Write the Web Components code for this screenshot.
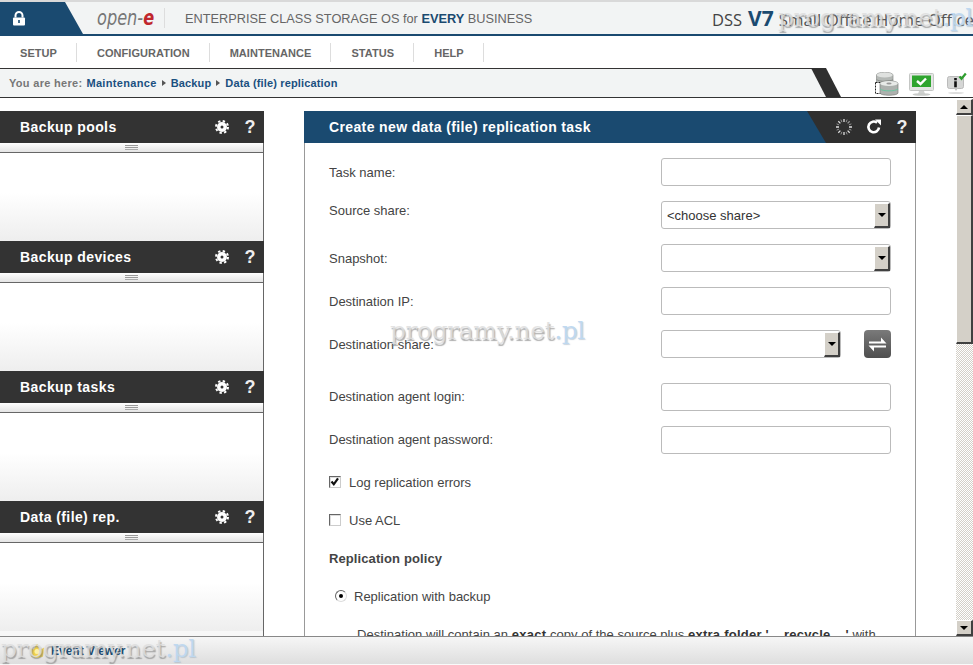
<!DOCTYPE html>
<html>
<head>
<meta charset="utf-8">
<title>open-e DSS V7</title>
<style>
  html, body { margin: 0; height: 100%; overflow: hidden; background: #fff; }
  body { display: flex; flex-direction: column; height: 665px; position: relative; font-family: "Liberation Sans", Arial, sans-serif; color: #444; }
  water-mark.top { left: 778px; top: 3px; }
  water-mark.mid { left: 390px; top: 316px; }
  water-mark.low { left: 1px; top: 634px; }
</style>
</head>
<body>
<app-header></app-header>
<nav-bar></nav-bar>
<bread-crumb></bread-crumb>
<main-area>
  <side-panel slot="side" title="Backup pools"></side-panel>
  <side-panel slot="side" title="Backup devices"></side-panel>
  <side-panel slot="side" title="Backup tasks"></side-panel>
  <side-panel slot="side" title="Data (file) rep."></side-panel>
  <task-panel slot="content" title="Create new data (file) replication task">
    <form-row label="Task name:"><text-box></text-box></form-row>
    <form-row label="Source share:" top><select-box value="&lt;choose share&gt;"></select-box></form-row>
    <form-row label="Snapshot:"><select-box></select-box></form-row>
    <form-row label="Destination IP:"><text-box></text-box></form-row>
    <form-row label="Destination share:" wide><select-box short></select-box><swap-button></swap-button></form-row>
    <form-row label="Destination agent login:" raise><text-box></text-box></form-row>
    <form-row label="Destination agent password:" raise><text-box></text-box></form-row>
    <check-line checked>Log replication errors</check-line>
    <check-line>Use ACL</check-line>
    <policy-block></policy-block>
  </task-panel>
</main-area>
<status-bar></status-bar>
<water-mark class="top"></water-mark>
<water-mark class="mid"></water-mark>
<water-mark class="low"></water-mark>

<script>
class AppHeader extends HTMLElement {
  constructor() {
    super();
    this.attachShadow({ mode: 'open' });
    this.shadowRoot.innerHTML = `
      <style>
        :host { display: flex; align-items: center; height: 32px; flex: none; background: #f2f4f4; border-top: 2px solid #d9d9d9; border-bottom: 2px solid #1a4a70; }
        .lock { width: 83px; height: 32px; flex: none; background: #1a4a70; clip-path: polygon(0 0, 65px 0, 83px 100%, 0 100%); display: flex; padding: 9px 0 0 12px; box-sizing: border-box; }
        .logo { margin-left: 14px; width: 67px; font: italic 21px/30px "DejaVu Sans", sans-serif; color: #777; transform: scaleX(.77); transform-origin: left center; white-space: nowrap; }
        .logo b { color: #c0272d; }
        .sep { width: 1px; height: 20px; background: #ddd; margin-right: 20px; }
        .slogan { font-size: 12.75px; color: #666; white-space: nowrap; }
        .slogan b { color: #1a4a70; }
        .edition { margin-left: auto; display: flex; align-items: baseline; font: 16.8px "Open Sans", sans-serif; color: #444; white-space: nowrap; width: 261px; }
        .edition b { font: bold 21px "Open Sans", sans-serif; color: #1a4a70; margin: 0 5px 0 6px; }
        .edition .d { font-size: 16.5px; }
        .edition .s { color: #555; }
      </style>
      <div class="lock">
        <svg width="14" height="15" viewBox="0 0 14 15"><path d="M3.5 6.5V4.5a3.5 3.5 0 0 1 7 0v2" fill="none" stroke="#fff" stroke-width="2"/><rect x="1" y="6.5" width="12" height="8" rx="1" fill="#fff"/><rect x="6.2" y="9" width="1.6" height="3" fill="#1a4a70"/></svg>
      </div>
      <div class="logo">open-<b>e</b></div>
      <div class="sep"></div>
      <div class="slogan">ENTERPRISE CLASS STORAGE OS for <b>EVERY</b> BUSINESS</div>
      <div class="edition"><span class="d">DSS</span><b>V7</b><span class="s">Small Office Home Office</span></div>
    `;
  }
}

class NavBar extends HTMLElement {
  constructor() {
    super();
    this.attachShadow({ mode: 'open' });
    const items = ['SETUP', 'CONFIGURATION', 'MAINTENANCE', 'STATUS', 'HELP'];
    this.shadowRoot.innerHTML = `
      <style>
        :host { display: flex; height: 32px; flex: none; align-items: center; background: #fff; }
        a { font-weight: bold; font-size: 11px; letter-spacing: .05px; color: #666; padding: 0 19px 0 20px; height: 19px; line-height: 20px; border-right: 1px solid #ddd; white-space: nowrap; }
      </style>
      ${items.map((i) => `<a>${i}</a>`).join('')}
    `;
  }
}

class BreadCrumb extends HTMLElement {
  constructor() {
    super();
    this.attachShadow({ mode: 'open' });
    this.shadowRoot.innerHTML = `
      <style>
        :host { display: flex; height: 30px; flex: none; box-sizing: border-box; border-bottom: 1px solid #333; }
        .bar { width: 826px; flex: none; box-sizing: border-box; border-top: 1px solid #333; background: #f2f4f4; display: flex; align-items: center; padding: 0 0 1px 9px; font-size: 11px; font-weight: bold; letter-spacing: .15px; white-space: nowrap; position: relative; }
        .here { color: #777; margin-right: 4px; letter-spacing: .3px; }
        a { color: #1a5080; }
        .first { letter-spacing: .33px; }
        i { width: 0; height: 0; border-left: 4px solid #555; border-top: 3.5px solid transparent; border-bottom: 3.5px solid transparent; margin: 0 5px; }
        .band { position: absolute; left: 802px; top: -1px; }
        .icons { display: flex; margin-left: 49px; padding-top: 4px; }
        .icons svg { display: block; flex: none; }
      </style>
      <div class="bar">
        <span class="here">You are here:</span><a class="first">Maintenance</a><i></i><a>Backup</a><i></i><a>Data (file) replication</a>
        <svg class="band" width="40" height="29"><polygon points="9,0 24,0 39,29 24,29" fill="#2f2f2f"/></svg>
      </div>
      <div class="icons">
        <svg width="25" height="25" viewBox="0 0 25 25">
          <path d="M1.500 3c0-3.500 16.500-3.500 16.500 0v10c0 3-16.500 3-16.500 0z" fill="#b4b8b5" stroke="#8a8d8a" stroke-width=".7"/>
          <ellipse cx="9.700" cy="3" rx="8" ry="2.400" fill="#dfe1df"/>
          <path d="M1.500 7.500c3 2.500 13.500 2.500 16.500 0" fill="none" stroke="#8f928f"/>
          <rect x=".5" y="10.500" width="8" height="11" fill="#fff" stroke="#222" stroke-dasharray="2 1"/>
          <path d="M5 11.500c0-3.500 18-3.500 18 0v9.500c0 3-18 3-18 0z" fill="#adb1ae" stroke="#7d807d" stroke-width=".7"/>
          <ellipse cx="14" cy="11.500" rx="8.800" ry="2.500" fill="#e8eae8"/>
          <ellipse cx="14" cy="11.500" rx="2.600" ry=".9" fill="#999"/>
          <path d="M5 17c3 2.500 15 2.500 18 0" fill="none" stroke="#6cc5a0"/>
        </svg>
        <svg width="26" height="23" viewBox="0 0 26 23" style="margin:1px 0 0 9px">
          <rect x=".5" y=".5" width="24" height="17" rx="1" fill="#e4e6e4" stroke="#c4c6c4"/>
          <rect x="3" y="2.500" width="19" height="11.500" fill="#2fa52f"/>
          <path d="M8 8l3.500 3L17 5.500" fill="none" stroke="#fff" stroke-width="2.400"/>
          <path d="M10 18h5l1 3H9z" fill="#d0d2d0"/><ellipse cx="12.500" cy="21.500" rx="9" ry="1.300" fill="#c9cbc9"/>
        </svg>
        <svg width="24" height="22" viewBox="0 0 24 22" style="margin:0 0 0 12px">
          <rect x=".5" y="4.500" width="16" height="12" rx="2" fill="#d5d6d5" stroke="#bbb"/>
          <path d="M7 16h4l-2 3z" fill="#c4c5c4"/>
          <rect x="7.200" y="6" width="2.600" height="2.300" fill="#111"/><rect x="7.200" y="9.300" width="2.600" height="6" fill="#111"/>
          <path d="M12.500 4.500l2 2.300 4.300-5.300" fill="none" stroke="#2e9e2e" stroke-width="2.200"/>
          <ellipse cx="9" cy="21" rx="8" ry=".9" fill="#ddd"/>
        </svg>
      </div>
    `;
  }
}

class MainArea extends HTMLElement {
  constructor() {
    super();
    this.attachShadow({ mode: 'open' });
    this.shadowRoot.innerHTML = `
      <style>
        :host { display: flex; flex: 1; min-height: 0; overflow: hidden; background: #fff; }
        .left { width: 264px; flex: none; box-sizing: border-box; padding-top: 13px; display: flex; flex-direction: column; }
        .fill { flex: 1; background: #f7f7f7; border-right: 1px solid #666; }
        .content { width: 612px; flex: none; margin: 13px 0 0 40px; }
      </style>
      <div class="left"><slot name="side"></slot><div class="fill"></div></div>
      <div class="content"><slot name="content"></slot></div>
      <scroll-bar></scroll-bar>
    `;
  }
}

class SidePanel extends HTMLElement {
  constructor() {
    super();
    this.attachShadow({ mode: 'open' });
    this.shadowRoot.innerHTML = `
      <style>
        :host { display: block; flex: none; height: 130px; }
        .head { height: 32px; background: #333; color: #fff; display: flex; align-items: center; padding: 0 6px 0 20px; }
        .name { flex: 1; font-weight: bold; font-size: 14px; letter-spacing: .4px; white-space: nowrap; }
        .head svg { overflow: visible; }
        .q { width: 16px; margin-left: 13px; text-align: center; color: #eee; font: bold 18px "Liberation Sans", sans-serif; }
        .grip { height: 9px; background: linear-gradient(#fff, #e4e4e4); border-bottom: 1px solid #666; border-right: 1px solid #666; display: flex; justify-content: center; align-items: center; }
        .grip span { width: 13px; height: 5px; background: linear-gradient(#999 1px, transparent 1px, transparent 2px, #999 2px, #999 3px, transparent 3px, transparent 4px, #aaa 4px); }
        .body { height: 88px; background: linear-gradient(#fff 45%, #eee); border-right: 1px solid #666; }
      </style>
      <div class="head">
        <div class="name">${this.getAttribute('title')}</div>
        <svg width="14" height="14" viewBox="0 0 14 14"><circle cx="7" cy="7" r="5" fill="#fff"/><circle cx="7" cy="7" r="6" fill="none" stroke="#fff" stroke-width="2" stroke-dasharray="2.350 2.360"/><circle cx="7" cy="7" r="1.500" fill="#333"/></svg>
        <div class="q">?</div>
      </div>
      <div class="grip"><span></span></div>
      <div class="body"></div>
    `;
  }
}

class TaskPanel extends HTMLElement {
  constructor() {
    super();
    this.attachShadow({ mode: 'open' });
    this.shadowRoot.innerHTML = `
      <style>
        :host { display: block; height: 525px; }
        .head { height: 32px; background: #2f2f2f; position: relative; display: flex; align-items: center; color: #fff; }
        .blue { position: absolute; left: 0; top: 0; bottom: 0; width: 522px; background: #1a4a70; clip-path: polygon(0 0, 503px 0, 522px 100%, 0 100%); }
        .name { position: relative; flex: 1; padding-left: 25px; font-weight: bold; font-size: 14px; letter-spacing: .37px; white-space: nowrap; }
        .head svg { position: relative; flex: none; }
        .q { position: relative; width: 16px; margin: 0 6px 0 12px; text-align: center; color: #eee; font: bold 18px "Liberation Sans", sans-serif; }
        .body { height: 493px; box-sizing: border-box; border-left: 1px solid #999; border-right: 1px solid #999; padding: 15px 24px 0; overflow: hidden; display: flex; flex-direction: column; }
      </style>
      <div class="head">
        <div class="blue"></div>
        <div class="name">${this.getAttribute('title')}</div>
        <svg width="18" height="18" viewBox="0 0 18 18" style="margin-right:13px" fill="none" stroke="#fff" stroke-width="1.300">
          <path d="M9 1v3M9 14v3M1 9h3M14 9h3M3.300 3.300l2.100 2.100M12.600 12.600l2.100 2.100M3.300 14.700l2.100-2.100" opacity=".85"/><path d="M12.600 5.400l2.100-2.100" opacity=".5"/>
          <path d="M5.900 1.600l1 2.500M11.100 13.900l1 2.500M1.600 12.100l2.500-1M13.900 6.900l2.500-1M12.100 1.600l-1 2.500M6.900 13.900l-1 2.500M1.600 5.900l2.500 1M13.900 11.100l2.500 1" stroke-width=".8" opacity=".6"/>
        </svg>
        <svg width="16" height="16" viewBox="0 0 16 16"><path d="M13 8.500A5.300 5.300 0 1 1 11 3.700" fill="none" stroke="#fff" stroke-width="2.600"/><path d="M9 .5h6v6z" fill="#fff"/></svg>
        <div class="q">?</div>
      </div>
      <div class="body"><slot></slot></div>
    `;
  }
}

class FormRow extends HTMLElement {
  constructor() {
    super();
    this.attachShadow({ mode: 'open' });
    const top = this.hasAttribute('top');
    const wide = this.hasAttribute('wide');
    const raise = this.hasAttribute('raise');
    this.shadowRoot.innerHTML = `
      <style>
        :host { display: grid; grid-template-columns: 332px 1fr; height: 28px; flex: none; margin-bottom: ${wide ? 25 : 15}px; }
        label { font-size: 13px; line-height: 18px; padding-top: ${raise ? 0 : 1}px; padding-bottom: ${raise ? 1 : 0}px; color: #444; white-space: nowrap; align-self: ${top ? 'start' : 'center'}; }
        div { display: flex; justify-content: space-between; }
      </style>
      <label>${this.getAttribute('label')}</label>
      <div><slot></slot></div>
    `;
  }
}

class TextBox extends HTMLElement {
  constructor() {
    super();
    this.attachShadow({ mode: 'open' });
    this.shadowRoot.innerHTML = `
      <style>
        :host { display: block; width: 230px; height: 28px; box-sizing: border-box; border: 1px solid #bbb; border-radius: 3px; background: #fff; }
      </style>
    `;
  }
}

class SelectBox extends HTMLElement {
  constructor() {
    super();
    this.attachShadow({ mode: 'open' });
    const short = this.hasAttribute('short');
    this.shadowRoot.innerHTML = `
      <style>
        :host { display: flex; width: ${short ? 180 : 230}px; height: 28px; box-sizing: border-box; border: 1px solid #bbb; border-radius: 3px; background: #fff; align-items: stretch; }
        .v { flex: 1; font-size: 13px; line-height: 27px; padding-left: 5px; color: #333; }
        .btn { width: 16px; margin: 1px 0 0; box-sizing: border-box; background: #d4d0c8; border-top: 1px solid #fff; border-left: 1px solid #fff; border-right: 2px solid #404040; border-bottom: 2px solid #404040; display: flex; align-items: center; justify-content: center; }
        .btn i { width: 0; height: 0; border-top: 4px solid #000; border-left: 4px solid transparent; border-right: 4px solid transparent; }
      </style>
      <div class="v">${(this.getAttribute('value') || '').replace('<', '&lt;')}</div>
      <div class="btn"><i></i></div>
    `;
  }
}

class SwapButton extends HTMLElement {
  constructor() {
    super();
    this.attachShadow({ mode: 'open' });
    this.shadowRoot.innerHTML = `
      <style>
        :host { display: flex; align-items: center; justify-content: center; width: 27px; height: 28px; border-radius: 4px; background: linear-gradient(#7a7a7a, #4e4e4e); }
      </style>
      <svg width="19" height="15" viewBox="0 0 19 15" fill="#fff"><path d="M1 4.500h12V.5l5.500 6H1zM18 8.500H.5L6 14.500v-4h12z"/></svg>
    `;
  }
}

class CheckLine extends HTMLElement {
  constructor() {
    super();
    this.attachShadow({ mode: 'open' });
    const mark = this.hasAttribute('checked')
      ? '<svg width="10" height="10" viewBox="0 0 10 10"><path d="M1.500 4.500l2.300 2.800 4.200-6" fill="none" stroke="#111" stroke-width="2.200"/></svg>'
      : '';
    this.shadowRoot.innerHTML = `
      <style>
        :host { display: flex; align-items: center; flex: none; height: 18px; margin-bottom: 20px; font-size: 13px; white-space: nowrap; }
        :host([checked]) { margin-top: 4px; }
        .box { width: 12px; height: 12px; box-sizing: border-box; border: 1px solid; border-color: #666 #ccc #ccc #666; box-shadow: inset 1px 1px 0 #ddd; background: #fff; margin-right: 8px; display: flex; align-items: center; justify-content: center; }
      </style>
      <div class="box">${mark}</div><slot></slot>
    `;
  }
}

class PolicyBlock extends HTMLElement {
  constructor() {
    super();
    this.attachShadow({ mode: 'open' });
    this.shadowRoot.innerHTML = `
      <style>
        :host { display: block; flex: none; font-size: 13px; white-space: nowrap; }
        h4 { margin: 0 0 19px; padding-top: 1px; font-size: 13px; line-height: 18px; letter-spacing: .1px; color: #444; }
        .radio { display: flex; align-items: center; height: 18px; margin: 0 0 21px 6px; }
        .dot { width: 12px; height: 12px; box-sizing: border-box; border-radius: 50%; border: 1px solid; border-color: #666 #ddd #ddd #666; margin-right: 7px; display: flex; align-items: center; justify-content: center; }
        .dot i { width: 4px; height: 4px; border-radius: 50%; background: #000; }
        p { margin: 0 0 0 28px; line-height: 18px; letter-spacing: .03px; }
        p b { color: #333; letter-spacing: .25px; }
      </style>
      <h4>Replication policy</h4>
      <div class="radio"><div class="dot"><i></i></div>Replication with backup</div>
      <p>Destination will contain an <b>exact</b> copy of the source plus <b>extra folder '__recycle__'</b> with</p>
    `;
  }
}

class ScrollBar extends HTMLElement {
  constructor() {
    super();
    this.attachShadow({ mode: 'open' });
    this.shadowRoot.innerHTML = `
      <style>
        :host { display: flex; flex-direction: column; width: 17px; flex: none; margin-left: 40px; padding-top: 1px; background: repeating-conic-gradient(#d4d0c8 0 25%, #fff 0 50%) 0 0 / 2px 2px; background-clip: content-box; }
        .b { height: 16px; flex: none; box-sizing: border-box; background: #d4d0c8; border-top: 1px solid #fff; border-left: 1px solid #fff; border-right: 2px solid #404040; border-bottom: 2px solid #404040; display: flex; align-items: center; justify-content: center; }
        .up { border-bottom: 4px solid #000; border-left: 4px solid transparent; border-right: 4px solid transparent; }
        .dn { border-top: 4px solid #000; border-left: 4px solid transparent; border-right: 4px solid transparent; }
        .thumb { height: 229px; flex: none; box-sizing: border-box; background: #d4d0c8; border-top: 1px solid #fff; border-left: 1px solid #fff; border-right: 2px solid #404040; border-bottom: 2px solid #404040; }
        .sp { flex: 1; }
      </style>
      <div class="b"><i class="up"></i></div>
      <div class="thumb"></div>
      <div class="sp"></div>
      <div class="b"><i class="dn"></i></div>
    `;
  }
}

class StatusBar extends HTMLElement {
  constructor() {
    super();
    this.attachShadow({ mode: 'open' });
    this.shadowRoot.innerHTML = `
      <style>
        :host { display: flex; align-items: center; flex: none; height: 29px; box-sizing: border-box; border-top: 1px solid #888; border-bottom: 1px solid #fafafa; background: linear-gradient(#f6f6f6, #dedede); padding: 0 0 0 29px; }
        span { font-size: 12px; font-weight: bold; color: #1a4a70; margin-left: 6px; }
      </style>
      <svg width="16" height="14" viewBox="0 0 16 14"><path d="M1 4l3.500 2L8 0l3.500 6L15 4l-1.500 8.500q-5.500 2-11 0z" fill="#f0d24a" stroke="#e6c93c" stroke-width=".5"/><circle cx="8" cy="7.500" r="2.500" fill="#fbf0a8"/></svg>
      <span>Event Viewer</span>
    `;
  }
}

class WaterMark extends HTMLElement {
  constructor() {
    super();
    this.attachShadow({ mode: 'open' });
    this.shadowRoot.innerHTML = `
      <style>
        :host { position: absolute; display: block; font: 25px "DejaVu Serif", serif; letter-spacing: -.42px; color: rgba(222,222,222,.85); text-shadow: 1px 2px 1px rgba(120,120,120,.6); white-space: nowrap; pointer-events: none; }
        span { color: rgba(190,216,240,.95); text-shadow: 1px 1px 1px rgba(150,170,190,.5); }
      </style>
      programy.net<span>.pl</span>
    `;
  }
}

customElements.define('app-header', AppHeader);
customElements.define('nav-bar', NavBar);
customElements.define('bread-crumb', BreadCrumb);
customElements.define('main-area', MainArea);
customElements.define('side-panel', SidePanel);
customElements.define('task-panel', TaskPanel);
customElements.define('form-row', FormRow);
customElements.define('text-box', TextBox);
customElements.define('select-box', SelectBox);
customElements.define('swap-button', SwapButton);
customElements.define('check-line', CheckLine);
customElements.define('policy-block', PolicyBlock);
customElements.define('scroll-bar', ScrollBar);
customElements.define('status-bar', StatusBar);
customElements.define('water-mark', WaterMark);
</script>
</body>
</html>
